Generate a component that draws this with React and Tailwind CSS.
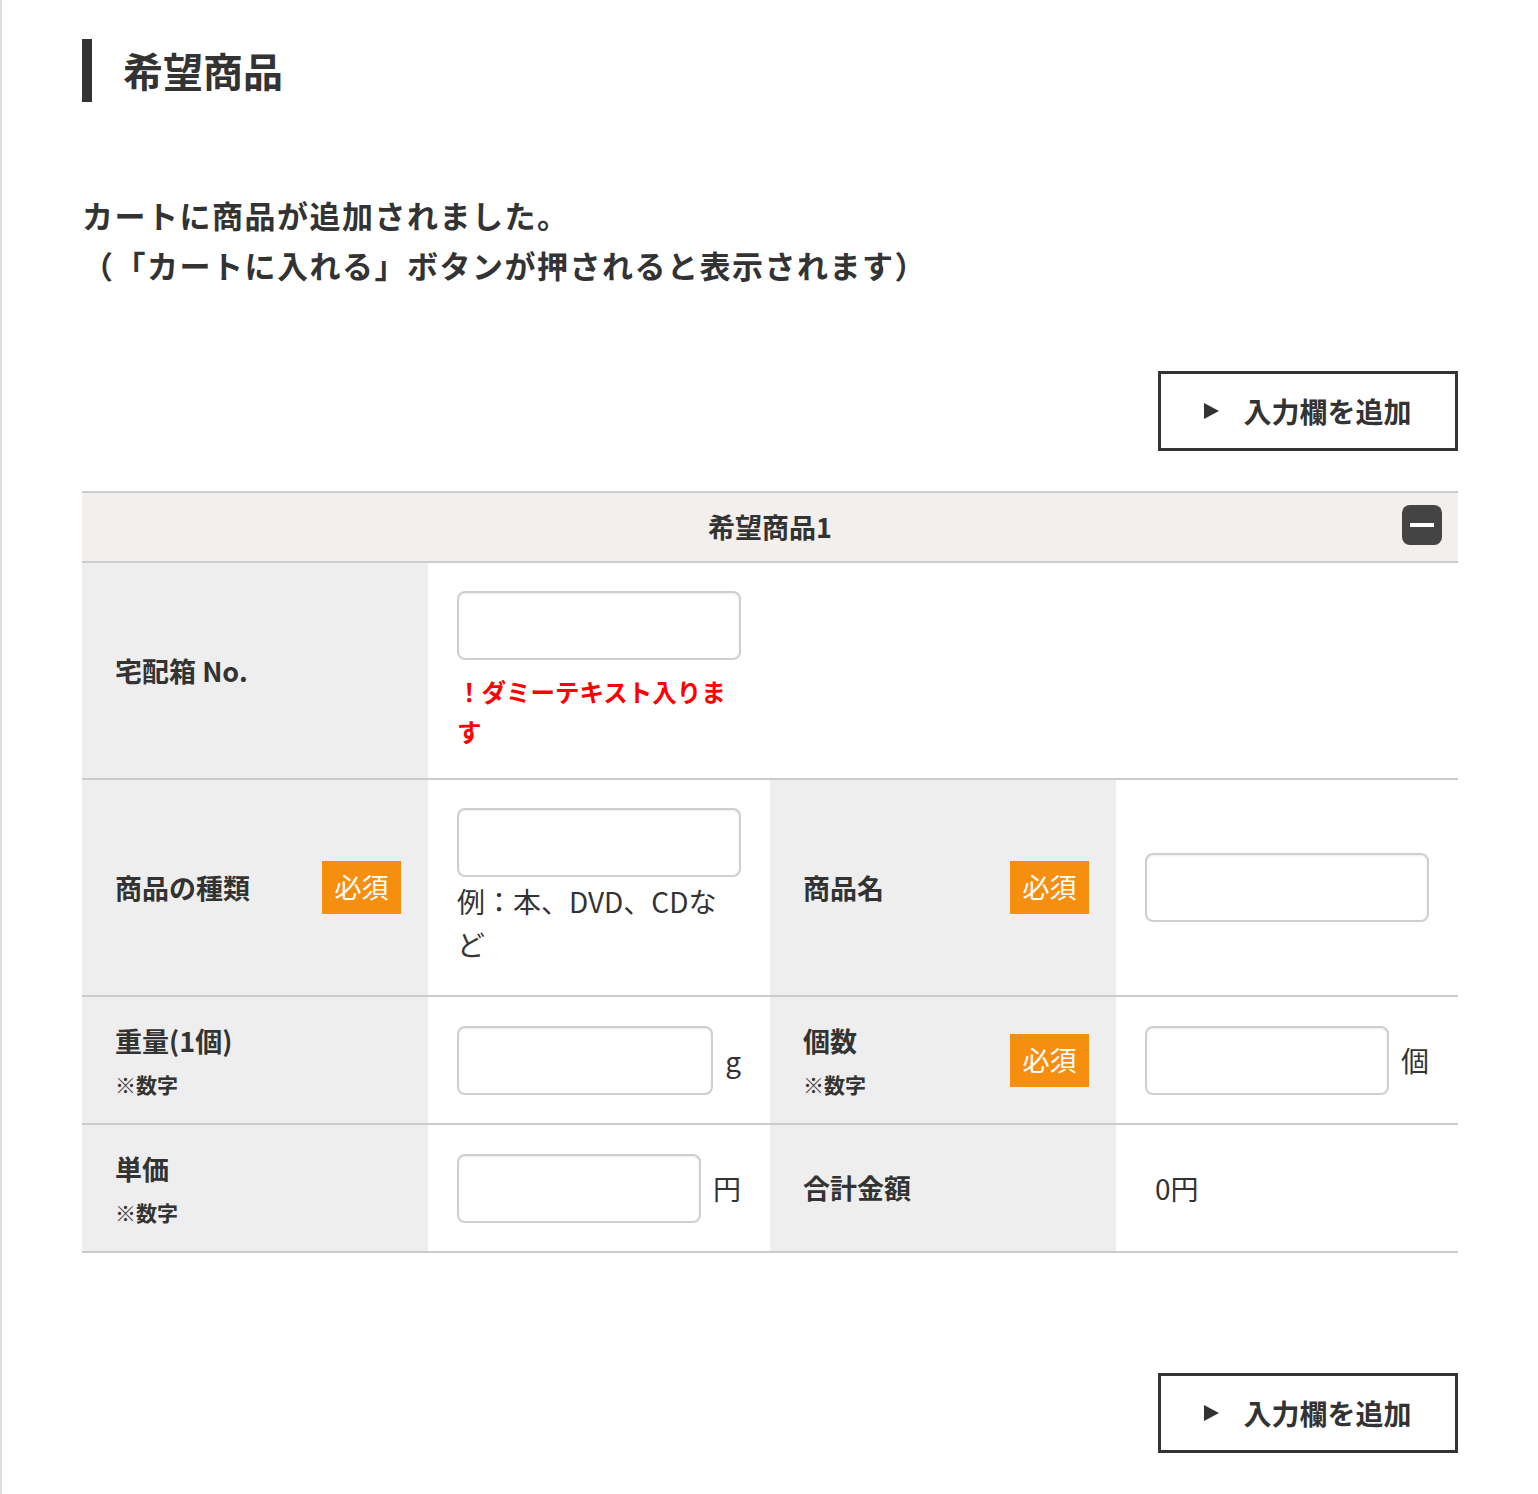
import React from "react";

const font = { fontFamily: '"Noto Sans CJK JP", "Noto Sans", sans-serif' };

const Badge = () => (
  <span className="flex h-[53px] w-[79px] shrink-0 items-center justify-center bg-[#f68f10] text-[27px] text-white">
    必須
  </span>
);

const Input = ({ className = "w-[284px]" }) => (
  <input
    type="text"
    className={`h-[69px] rounded-[8px] border-2 border-[#cfcfcf] bg-white shadow-[inset_0_1px_2px_rgba(0,0,0,0.08)] ${className}`}
  />
);

const Label = ({ title, note, required }) => (
  <div className="flex items-center justify-between bg-[#eeeeee] pl-[33px] pr-[27px]">
    <div>
      <p className="text-[27px] font-bold leading-[36px] text-[#333]">{title}</p>
      {note && <p className="mt-[11px] text-[21px] font-bold leading-[28px] text-[#333]">{note}</p>}
    </div>
    {required && <Badge />}
  </div>
);

const AddButton = () => (
  <button className="flex h-[80px] w-[300px] items-center justify-center gap-[24px] border-[3px] border-[#333] bg-white text-[28px] font-bold text-[#333]">
    <svg width="15" height="16" viewBox="0 0 15 16">
      <path d="M0 0 L15 8 L0 16 Z" fill="#333" />
    </svg>
    <span>入力欄を追加</span>
  </button>
);

const rowGrid = "grid grid-cols-[346px_342px_346px_342px] border-b-2 border-[#cccccc]";

export default function App() {
  return (
    <div
      className="min-h-screen border-l-2 border-[#dedede] bg-white text-[#333] [text-spacing-trim:space-all]"
      style={font}
    >
      <div className="pl-[80px] pr-[80px] pb-[42px]">
        {/* Heading */}
        <div className="pt-[39px]">
          <h1 className="border-l-[10px] border-[#333] pl-[31px] text-[40px] font-bold leading-[63px]">
            希望商品
          </h1>
        </div>

        {/* Message */}
        <div className="mt-[88px] text-[31px] font-bold leading-[50px] tracking-[1.5px]">
          <p>カートに商品が追加されました。</p>
          <p>（「カートに入れる」ボタンが押されると表示されます）</p>
        </div>

        <div className="mt-[81px] flex justify-end">
          <AddButton />
        </div>

        {/* Table */}
        <div className="mt-[40px]">
          <div className="relative flex h-[72px] items-center justify-center border-y-2 border-[#cccccc] bg-[#f2efec]">
            <span className="text-[27px] font-bold">希望商品1</span>
            <button className="absolute right-[16px] top-[12px] flex h-[40px] w-[40px] items-center justify-center rounded-[8px] bg-[#444]">
              <span className="h-[4px] w-[24px] bg-white"></span>
            </button>
          </div>

          {/* Row 1 */}
          <div className={`${rowGrid} h-[217px]`}>
            <Label title="宅配箱 No." />
            <div className="col-span-3 px-[29px] pt-[28px]">
              <Input />
              <p className="mt-[12px] w-[284px] text-[24.5px] font-bold leading-[40px] text-[#ff0000]">
                ！ダミーテキスト入ります
              </p>
            </div>
          </div>

          {/* Row 2 */}
          <div className={`${rowGrid} h-[217px]`}>
            <Label title="商品の種類" required />
            <div className="px-[29px] pt-[28px]">
              <Input />
              <p className="mt-[3px] text-[28px] leading-[43px]">例：本、DVD、CDなど</p>
            </div>
            <Label title="商品名" required />
            <div className="flex items-center px-[29px]">
              <Input />
            </div>
          </div>

          {/* Row 3 */}
          <div className={`${rowGrid} h-[128px]`}>
            <Label title="重量(1個)" note="※数字" />
            <div className="flex items-center gap-[12px] px-[29px]">
              <Input className="w-[258px]" />
              <span className="text-[28px]">g</span>
            </div>
            <Label title="個数" note="※数字" required />
            <div className="flex items-center gap-[12px] px-[29px]">
              <Input className="w-[246px]" />
              <span className="text-[28px]">個</span>
            </div>
          </div>

          {/* Row 4 */}
          <div className={`${rowGrid} h-[128px]`}>
            <Label title="単価" note="※数字" />
            <div className="flex items-center gap-[12px] px-[29px]">
              <Input className="w-[246px]" />
              <span className="text-[28px]">円</span>
            </div>
            <Label title="合計金額" />
            <div className="flex items-center px-[39px]">
              <span className="text-[28px]">0円</span>
            </div>
          </div>
        </div>

        <div className="mt-[120px] flex justify-end">
          <AddButton />
        </div>
      </div>
    </div>
  );
}
